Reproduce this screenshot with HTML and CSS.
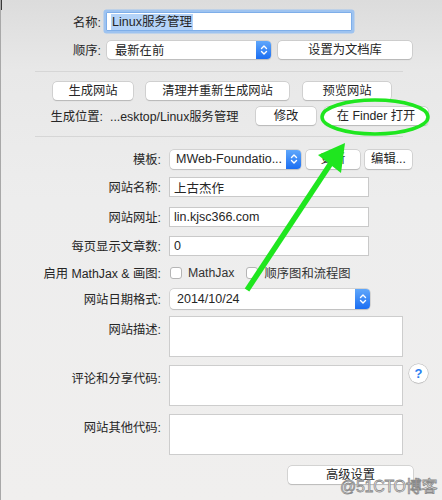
FILE: index.html
```html
<!DOCTYPE html>
<html>
<head>
<meta charset="utf-8">
<link rel="stylesheet" href="styles.css">
</head>
<body>
<div class="window">
  <div class="corner"></div>
  <section class="top">
    <div class="row r-name">
      <span class="lbl lw1">名称:</span>
      <div class="field focus"><span class="selected">Linux服务管理</span></div>
    </div>
    <div class="row r-order">
      <span class="lbl lw1">顺序:</span>
      <div class="select s-order"><span class="sv">最新在前</span><span class="stepper"><svg width="8" height="12" viewBox="0 0 8 12"><path d="M1.5 4.5 L4 2 L6.5 4.5 M1.5 7.5 L4 10 L6.5 7.5" fill="none" stroke="#fff" stroke-width="1.4" stroke-linecap="round" stroke-linejoin="round"/></svg></span></div>
      <button class="btn b-lib">设置为文档库</button>
    </div>
  </section>
  <div class="sep sep1"></div>
  <section class="gen">
    <div class="row r-btns">
      <button class="btn b-gen">生成网站</button>
      <button class="btn b-clean">清理并重新生成网站</button>
      <button class="btn b-preview">预览网站</button>
    </div>
    <div class="row r-loc">
      <span class="lbl loc-lbl">生成位置:</span>
      <span class="path">...esktop/Linux服务管理</span>
      <button class="btn b-edit">修改</button>
      <button class="btn b-finder">在 Finder 打开</button>
    </div>
  </section>
  <div class="sep sep2"></div>
  <section class="site">
    <div class="row r-tpl">
      <span class="lbl lw3">模板:</span>
      <div class="select s-tpl"><span class="sv">MWeb-Foundatio...</span><span class="stepper"><svg width="8" height="12" viewBox="0 0 8 12"><path d="M1.5 4.5 L4 2 L6.5 4.5 M1.5 7.5 L4 10 L6.5 7.5" fill="none" stroke="#fff" stroke-width="1.4" stroke-linecap="round" stroke-linejoin="round"/></svg></span></div>
      <button class="btn b-update">更新</button>
      <button class="btn b-editt">编辑...</button>
    </div>
    <div class="row r-in">
      <span class="lbl lw3">网站名称:</span>
      <div class="field text">上古杰作</div>
    </div>
    <div class="row r-in">
      <span class="lbl lw3">网站网址:</span>
      <div class="field text">lin.kjsc366.com</div>
    </div>
    <div class="row r-in">
      <span class="lbl lw3">每页显示文章数:</span>
      <div class="field text">0</div>
    </div>
    <div class="row r-check">
      <span class="lbl lw3">启用 MathJax &amp; 画图:</span>
      <span class="cb"></span><span class="cbl">MathJax</span>
      <span class="cb cb2"></span><span class="cbl">顺序图和流程图</span>
    </div>
    <div class="row r-date">
      <span class="lbl lw3">网站日期格式:</span>
      <div class="select s-date"><span class="sv">2014/10/24</span><span class="stepper"><svg width="8" height="12" viewBox="0 0 8 12"><path d="M1.5 4.5 L4 2 L6.5 4.5 M1.5 7.5 L4 10 L6.5 7.5" fill="none" stroke="#fff" stroke-width="1.4" stroke-linecap="round" stroke-linejoin="round"/></svg></span></div>
    </div>
    <div class="row r-area">
      <span class="lbl lw3">网站描述:</span>
      <div class="area"></div>
    </div>
    <div class="row r-area">
      <span class="lbl lw3">评论和分享代码:</span>
      <div class="area"></div>
      <span class="help">?</span>
    </div>
    <div class="row r-area">
      <span class="lbl lw3">网站其他代码:</span>
      <div class="area"></div>
    </div>
    <div class="row r-adv">
      <button class="btn b-adv">高级设置</button>
    </div>
  </section>
  <svg class="annot" width="442" height="500" viewBox="0 0 442 500">
    <ellipse cx="375" cy="117" rx="53" ry="17" fill="none" stroke="#1fe61f" stroke-width="3.5"/>
    <line x1="247" y1="290" x2="333" y2="160" stroke="#1fe61f" stroke-width="5.5"/>
    <polygon points="345,143 318,155 341,173" fill="#1fe61f"/>
  </svg>
  <div class="watermark">@51CTO博客</div>
</div>
</body>
</html>
```
FILE: styles.css
```css
* { box-sizing: border-box; }
html, body { margin: 0; padding: 0; }
body {
  width: 442px;
  height: 500px;
  overflow: hidden;
  font-family: "Liberation Sans", "Noto Sans CJK SC", sans-serif;
  font-size: 12.3px;
  color: #262626;
}
.window {
  position: relative;
  width: 442px;
  height: 500px;
  background: linear-gradient(180deg, #dcdcdc 0px, #e8e8e8 70px, #ededed 200px, #f0efee 500px);
  border-left: 1px solid #a8a8a8;
  overflow: hidden;
}
.corner {
  position: absolute;
  left: -1px; top: 0;
  width: 2px; height: 10px;
  background: #3a3a3a;
}
.row { display: flex; align-items: center; }
.lbl { text-align: right; white-space: nowrap; flex: none; }
.lw1 { width: 100px; }
.lw3 { width: 160px; }

.top { padding-top: 10px; }
.r-name { height: 23px; }
.r-name .field { margin-left: 5px; }
.field {
  background: #fff;
  border: 1px solid #c9c9c9;
  height: 20px;
  display: flex;
  align-items: center;
  padding-left: 4px;
  white-space: nowrap;
}
.field.focus {
  width: 246px;
  height: 19px;
  border-color: #7eaee9;
  box-shadow: 0 0 0 2.5px #9ec3f0;
  border-radius: 1px;
  font-size: 12.5px;
}
.selected { background: #b4d3f8; padding: 0 1px; line-height: 16px; }
.r-order { height: 20px; margin-top: 7px; }
.select {
  display: flex;
  align-items: center;
  background: #fff;
  border-radius: 4px;
  box-shadow: 0 0 0 0.5px #bdbdbd, 0 0.5px 1px rgba(0,0,0,0.18);
  height: 18px;
  overflow: hidden;
}
.sv { flex: 1; padding-left: 7px; white-space: nowrap; }
.stepper {
  width: 15px; height: 100%;
  flex: none;
  display: flex; align-items: center; justify-content: center;
  background: linear-gradient(180deg, #5fa7fb, #1b6ef2);
}
.s-order { width: 164px; margin-left: 6px; }
.s-order .sv { padding-left: 8px; }
.btn {
  font: inherit;
  color: #262626;
  background: #fff;
  border: none;
  border-radius: 4px;
  box-shadow: 0 0 0 0.5px #bcbcbc, 0 0.5px 1px rgba(0,0,0,0.22);
  height: 18px;
  padding: 0;
  line-height: 18px;
  text-align: center;
  white-space: nowrap;
}
.b-lib { width: 134px; margin-left: 7px; }

.sep { height: 1px; background: #d6d6d6; margin-left: 34px; width: 368px; }
.sep1 { margin-top: 11px; }
.gen { padding-top: 10px; }
.r-btns { height: 18px; padding-left: 52px; }
.b-gen { width: 80px; }
.b-clean { width: 143px; margin-left: 13px; }
.b-preview { width: 88px; margin-left: 14px; }
.r-loc { height: 18px; margin-top: 7px; }
.loc-lbl { width: 102px; }
.path { margin-left: 7px; width: 140px; white-space: nowrap; }
.b-edit { width: 60px; margin-left: 6px; }
.b-finder { width: 104px; margin-left: 8px; }
.sep2 { margin-top: 11px; }

.site { padding-top: 12px; }
.r-tpl { height: 20px; }
.s-tpl { width: 131px; height: 19px; margin-left: 9px; }
.s-tpl .sv { font-size: 12.5px; padding-left: 6px; }
.b-update { width: 54px; height: 19px; margin-left: 5px; }
.b-editt { width: 47px; height: 19px; margin-left: 5px; }
.r-in { height: 20px; margin-top: 8px; }
.r-in + .r-in { margin-top: 9.5px; }
.field.text { width: 200px; margin-left: 8px; font-size: 12.5px; padding-left: 4px; }
.r-check { height: 16px; margin-top: 9px; }
.cb {
  width: 12px; height: 12px;
  margin-left: 9px;
  background: #fff;
  border: 1px solid #b5b5b5;
  border-radius: 3px;
  flex: none;
}
.cbl { margin-left: 6px; color: #333; }
.cb2 { margin-left: 12px; }
.r-date { height: 21px; margin-top: 7px; }
.s-date { width: 200px; height: 20px; margin-left: 9px; }
.s-date .sv { font-size: 12.5px; padding-left: 7px; }
.r-area { align-items: flex-start; margin-top: 7px; height: 41px; }
.r-area + .r-area { margin-top: 8px; }
.r-area .lbl { padding-top: 4px; }
.area {
  width: 234px; height: 41px;
  margin-left: 8px;
  background: #fff;
  border: 1px solid #cdcdcd;
}
.help {
  width: 19px; height: 19px;
  margin-left: 6px;
  margin-top: -1px;
  border-radius: 50%;
  background: #fff;
  box-shadow: 0 0 0 0.5px #b8b8b8, 0 0.5px 1px rgba(0,0,0,0.2);
  color: #2a7ef0;
  font-weight: bold;
  font-size: 13px;
  display: flex; align-items: center; justify-content: center;
}
.r-adv { height: 18px; margin-top: 11px; padding-left: 287px; }
.b-adv { width: 125px; }

.annot { position: absolute; left: -1px; top: 0; pointer-events: none; }
.watermark {
  position: absolute;
  left: 339px; top: 473px;
  font-size: 16px;
  color: #fff;
  -webkit-text-stroke: 0.8px #8a8a8a;
  letter-spacing: -0.3px;
  font-family: "Liberation Sans", "Noto Sans CJK SC", sans-serif;
}
```
